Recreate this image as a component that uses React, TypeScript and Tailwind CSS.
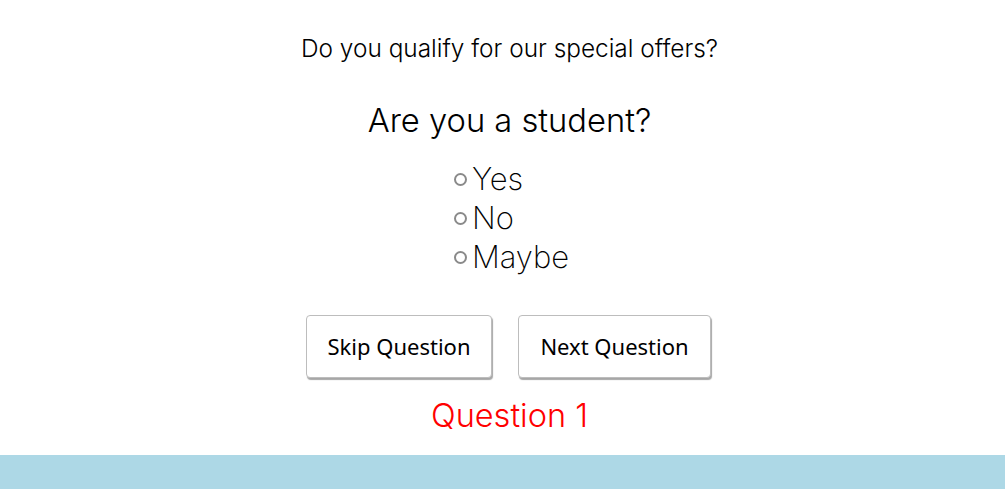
import React from "react";

export default function App() {
  const opts = ["Yes", "No", "Maybe"];
  return (
    <div className="w-[1005px] h-[489px] bg-white flex flex-col overflow-hidden" style={{ fontFamily: "Inter, 'Noto Sans', sans-serif" }}>
      <div className="flex-1 flex flex-col items-center pl-[14px]">
        <h1 className="mt-[32px] text-[24.4px] leading-[32px] font-light text-black">Do you qualify for our special offers?</h1>
        <h2 className="mt-[36px] text-[32.7px] leading-[40px] font-light text-black">Are you a student?</h2>
        <div className="mt-[20px] ml-[4px] flex flex-col items-start">
          {opts.map((o) => (
            <label key={o} className="flex items-center h-[39px] text-[31px] font-extralight text-black">
              <span className="w-[13px] h-[13px] rounded-full border-2 border-[#8a8a8a] mr-[5px] box-border" />
              {o}
            </label>
          ))}
        </div>
        <div className="mt-[38px] mr-[2px] flex gap-[26px]" style={{ fontFamily: "'Noto Sans', 'Open Sans', sans-serif" }}>
          <button className="w-[186px] h-[63px] bg-white border border-[#bdbdbd] rounded-[4px] shadow-[1px_2px_1px_rgba(0,0,0,0.35)] text-[22px] text-black">Skip Question</button>
          <button className="w-[193px] h-[63px] bg-white border border-[#bdbdbd] rounded-[4px] shadow-[1px_2px_1px_rgba(0,0,0,0.35)] text-[22px] text-black">Next Question</button>
        </div>
        <div className="mt-[18px] text-[32.5px] leading-[40px] font-light text-[#ff0000]">Question 1</div>
      </div>
      <div className="h-[34px] bg-[#add8e6]" />
    </div>
  );
}
